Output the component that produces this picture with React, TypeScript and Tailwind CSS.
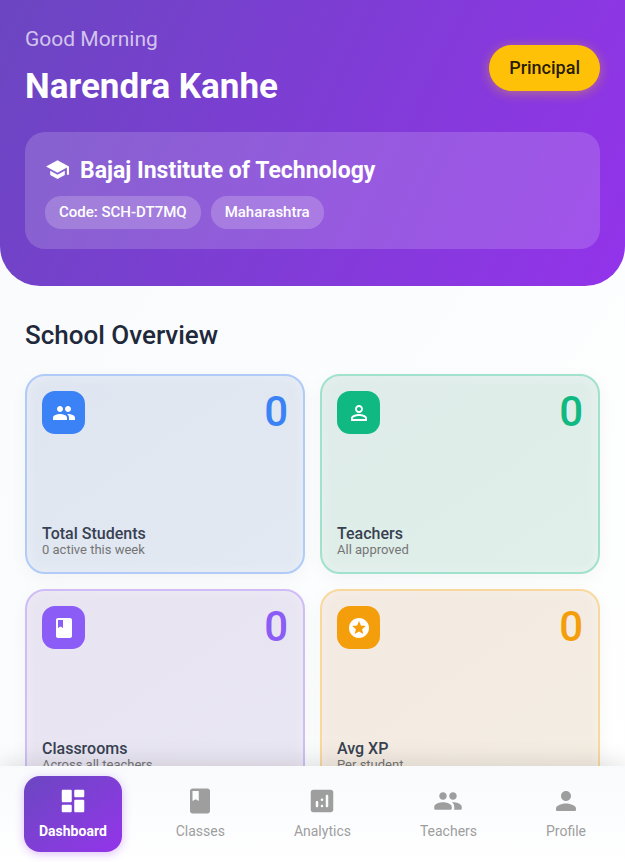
import React from "react";

const icons = {
  school:
    "M5 13.18v4L12 21l7-3.82v-4L12 17l-7-3.82zM12 3L1 9l11 6 9-4.91V17h2V9L12 3z",
  people:
    "M16 11c1.66 0 2.99-1.34 2.99-3S17.66 5 16 5s-3 1.34-3 3 1.34 3 3 3zm-8 0c1.66 0 2.99-1.34 2.99-3S9.66 5 8 5 5 6.34 5 8s1.34 3 3 3zm0 2c-2.33 0-7 1.17-7 3.5V19h14v-2.5c0-2.33-4.67-3.5-7-3.5zm8 0c-.29 0-.62.02-.97.05 1.16.84 1.97 1.97 1.97 3.45V19h6v-2.5c0-2.33-4.67-3.5-7-3.5z",
  peopleRound:
    "M16 11c1.66 0 2.99-1.34 2.99-3S17.66 5 16 5s-3 1.34-3 3 1.34 3 3 3zm-8 0c1.66 0 2.99-1.34 2.99-3S9.66 5 8 5 5 6.34 5 8s1.34 3 3 3zm0 2c-2.33 0-7 1.17-7 3.5V18c0 .55.45 1 1 1h12c.55 0 1-.45 1-1v-1.5c0-2.33-4.67-3.5-7-3.5zm8 0c-.29 0-.62.02-.97.05.02.01.03.03.04.04 1.14.83 1.93 1.94 1.93 3.41V18c0 .35-.07.69-.18 1H22c.55 0 1-.45 1-1v-1.5c0-2.33-4.67-3.5-7-3.5z",
  personOutline:
    "M12 5.9c1.16 0 2.1.94 2.1 2.1s-.94 2.1-2.1 2.1S9.9 9.16 9.9 8s.94-2.1 2.1-2.1m0 9c2.97 0 6.1 1.46 6.1 2.1v1.1H5.9V17c0-.64 3.13-2.1 6.1-2.1M12 4C9.79 4 8 5.79 8 8s1.79 4 4 4 4-1.79 4-4-1.79-4-4-4zm0 9c-2.67 0-8 1.34-8 4v3h16v-3c0-2.66-5.33-4-8-4z",
  book: "M18 2H6c-1.1 0-2 .9-2 2v16c0 1.1.9 2 2 2h12c1.1 0 2-.9 2-2V4c0-1.1-.9-2-2-2zM6 4h5v8l-2.500-1.500L6 12V4z",
  stars:
    "M11.99 2C6.47 2 2 6.48 2 12s4.470 10 9.990 10C17.520 22 22 17.520 22 12S17.520 2 11.990 2zm4.240 16L12 15.450 7.770 18l1.120-4.810-3.730-3.230 4.920-.420L12 5l1.920 4.530 4.920.420-3.730 3.230L16.230 18z",
  dashboard:
    "M4 13h6c.55 0 1-.45 1-1V4c0-.55-.45-1-1-1H4c-.55 0-1 .45-1 1v8c0 .55.45 1 1 1zm0 8h6c.55 0 1-.45 1-1v-4c0-.55-.45-1-1-1H4c-.55 0-1 .45-1 1v4c0 .55.45 1 1 1zm10 0h6c.55 0 1-.45 1-1v-8c0-.55-.45-1-1-1h-6c-.55 0-1 .45-1 1v8c0 .55.45 1 1 1zM13 4v4c0 .55.45 1 1 1h6c.55 0 1-.45 1-1V4c0-.55-.45-1-1-1h-6c-.55 0-1 .45-1 1z",
  analytics:
    "M19 3H5c-1.100 0-2 .900-2 2v14c0 1.100.900 2 2 2h14c1.100 0 2-.900 2-2V5c0-1.100-.900-2-2-2zM8 17c-.550 0-1-.450-1-1v-3c0-.550.450-1 1-1s1 .450 1 1v3c0 .550-.450 1-1 1zm4 0c-.550 0-1-.450-1-1s.450-1 1-1 1 .450 1 1-.450 1-1 1zm0-5c-.550 0-1-.450-1-1s.450-1 1-1 1 .450 1 1-.450 1-1 1zm4 5c-.550 0-1-.450-1-1V8c0-.550.450-1 1-1s1 .450 1 1v8c0 .550-.450 1-1 1z",
  person:
    "M12 12c2.210 0 4-1.790 4-4s-1.790-4-4-4-4 1.790-4 4 1.790 4 4 4zm0 2c-2.670 0-8 1.340-8 4v1c0 .550.450 1 1 1h14c.550 0 1-.450 1-1v-1c0-2.660-5.330-4-8-4z",
};

type IconName = keyof typeof icons;

function Icon({ name, className }: { name: IconName; className: string }) {
  return (
    <svg viewBox="0 0 24 24" fill="currentColor" aria-hidden="true" className={className}>
      <path fillRule="evenodd" d={icons[name]} />
    </svg>
  );
}

const stats: {
  title: string;
  note: string;
  icon: IconName;
  card: string;
  badge: string;
  number: string;
}[] = [
  {
    title: "Total Students",
    note: "0 active this week",
    icon: "people",
    card: "border-[#b0cbf8] from-[#e0e6f1] to-[#e2e9f2]",
    badge: "bg-[#3b82f6]",
    number: "text-[#3b82f6]",
  },
  {
    title: "Teachers",
    note: "All approved",
    icon: "personOutline",
    card: "border-[#a0e2cc] from-[#dfece9] to-[#e0efea]",
    badge: "bg-[#10b981]",
    number: "text-[#10b981]",
  },
  {
    title: "Classrooms",
    note: "Across all teachers",
    icon: "book",
    card: "border-[#d0bdf8] from-[#e8e4f1] to-[#e9e6f3]",
    badge: "bg-[#8b5cf6]",
    number: "text-[#8b5cf6]",
  },
  {
    title: "Avg XP",
    note: "Per student",
    icon: "stars",
    card: "border-[#f9d89d] from-[#f3eae2] to-[#f4ede2]",
    badge: "bg-[#f59e0b]",
    number: "text-[#f59e0b]",
  },
];

const tabs: { label: string; icon: IconName }[] = [
  { label: "Dashboard", icon: "dashboard" },
  { label: "Classes", icon: "book" },
  { label: "Analytics", icon: "analytics" },
  { label: "Teachers", icon: "peopleRound" },
  { label: "Profile", icon: "person" },
];

function Header() {
  return (
    <header className="rounded-b-[40px] bg-linear-[115deg,#6b46c1,#9333ea] px-[25px] pt-6 pb-[37px] text-white">
      <div className="flex items-center justify-between">
        <div>
          <p className="text-[21px] leading-[30px] text-white/70">Good Morning</p>
          <h1 className="mt-2 text-[35px] leading-[50px] font-bold">Narendra Kanhe</h1>
        </div>
        <span className="rounded-full bg-[#ffc107] px-5 py-[11px] text-lg leading-6 font-medium text-black/87 shadow-[0_2px_12px_rgba(255,193,7,0.4)]">
          Principal
        </span>
      </div>
      <section className="mt-5 rounded-[20px] bg-white/16 px-5 pt-6 pb-5">
        <div className="flex items-center gap-[10px]">
          <Icon name="school" className="mb-1 size-[25px]" />
          <h2 className="text-[23px] leading-[30px] font-bold">Bajaj Institute of Technology</h2>
        </div>
        <div className="mt-[10px] flex gap-[10px] text-[15px] leading-[21px] font-medium">
          <span className="rounded-2xl bg-white/20 px-[14px] py-[6px]">Code: SCH-DT7MQ</span>
          <span className="rounded-2xl bg-white/20 px-[14px] py-[6px]">Maharashtra</span>
        </div>
      </section>
    </header>
  );
}

function Overview() {
  return (
    <section className="px-[25px] pt-8 pb-6">
      <h2 className="text-[26px] leading-[34px] font-medium text-[#1e293b]">School Overview</h2>
      <div className="mt-[22px] grid grid-cols-2 gap-[15px]">
        {stats.map((s) => (
          <article
            key={s.title}
            className={`flex h-[200px] flex-col justify-between rounded-[20px] border-2 bg-linear-to-br px-[15px] pt-[15px] pb-[14px] shadow-[0_5px_18px_rgba(0,0,0,0.04),inset_0_0_14px_rgba(255,255,255,0.3)] ${s.card}`}
          >
            <div className="flex items-start justify-between">
              <span className={`flex size-[43px] items-center justify-center rounded-[13px] text-white ${s.badge}`}>
                <Icon name={s.icon} className="size-6" />
              </span>
              <span className={`text-[42px] leading-[42px] font-medium ${s.number}`}>0</span>
            </div>
            <div>
              <h3 className="text-base leading-4 font-medium text-[#374151]">{s.title}</h3>
              <p className="text-[13px] leading-4 text-[#757575]">{s.note}</p>
            </div>
          </article>
        ))}
      </div>
    </section>
  );
}

function TabBar() {
  return (
    <nav className="relative z-10 flex shrink-0 justify-between bg-linear-to-b from-[#f8fafc] to-white px-6 py-[10px] shadow-[0_-5px_20px_rgba(0,0,0,0.1)]">
      {tabs.map((t, i) => (
        <button
          key={t.label}
          type="button"
          aria-current={i === 0 ? "page" : undefined}
          className={`flex h-[76px] flex-col items-center gap-[6px] rounded-2xl px-[15px] pt-[10px] text-sm leading-[18px] ${
            i === 0
              ? "bg-linear-to-br from-[#6b46c1] to-[#9333ea] font-bold text-white shadow-[0_2px_10px_rgba(147,51,234,0.3)]"
              : "text-[#9e9e9e]"
          }`}
        >
          <Icon name={t.icon} className="size-[30px]" />
          {t.label}
        </button>
      ))}
    </nav>
  );
}

export default function App() {
  return (
    <div className="flex h-dvh flex-col bg-linear-to-br from-[#f8fafc] to-white font-[Roboto,sans-serif]">
      <main className="min-h-0 flex-1 overflow-y-auto [scrollbar-width:none]">
        <Header />
        <Overview />
      </main>
      <TabBar />
    </div>
  );
}
